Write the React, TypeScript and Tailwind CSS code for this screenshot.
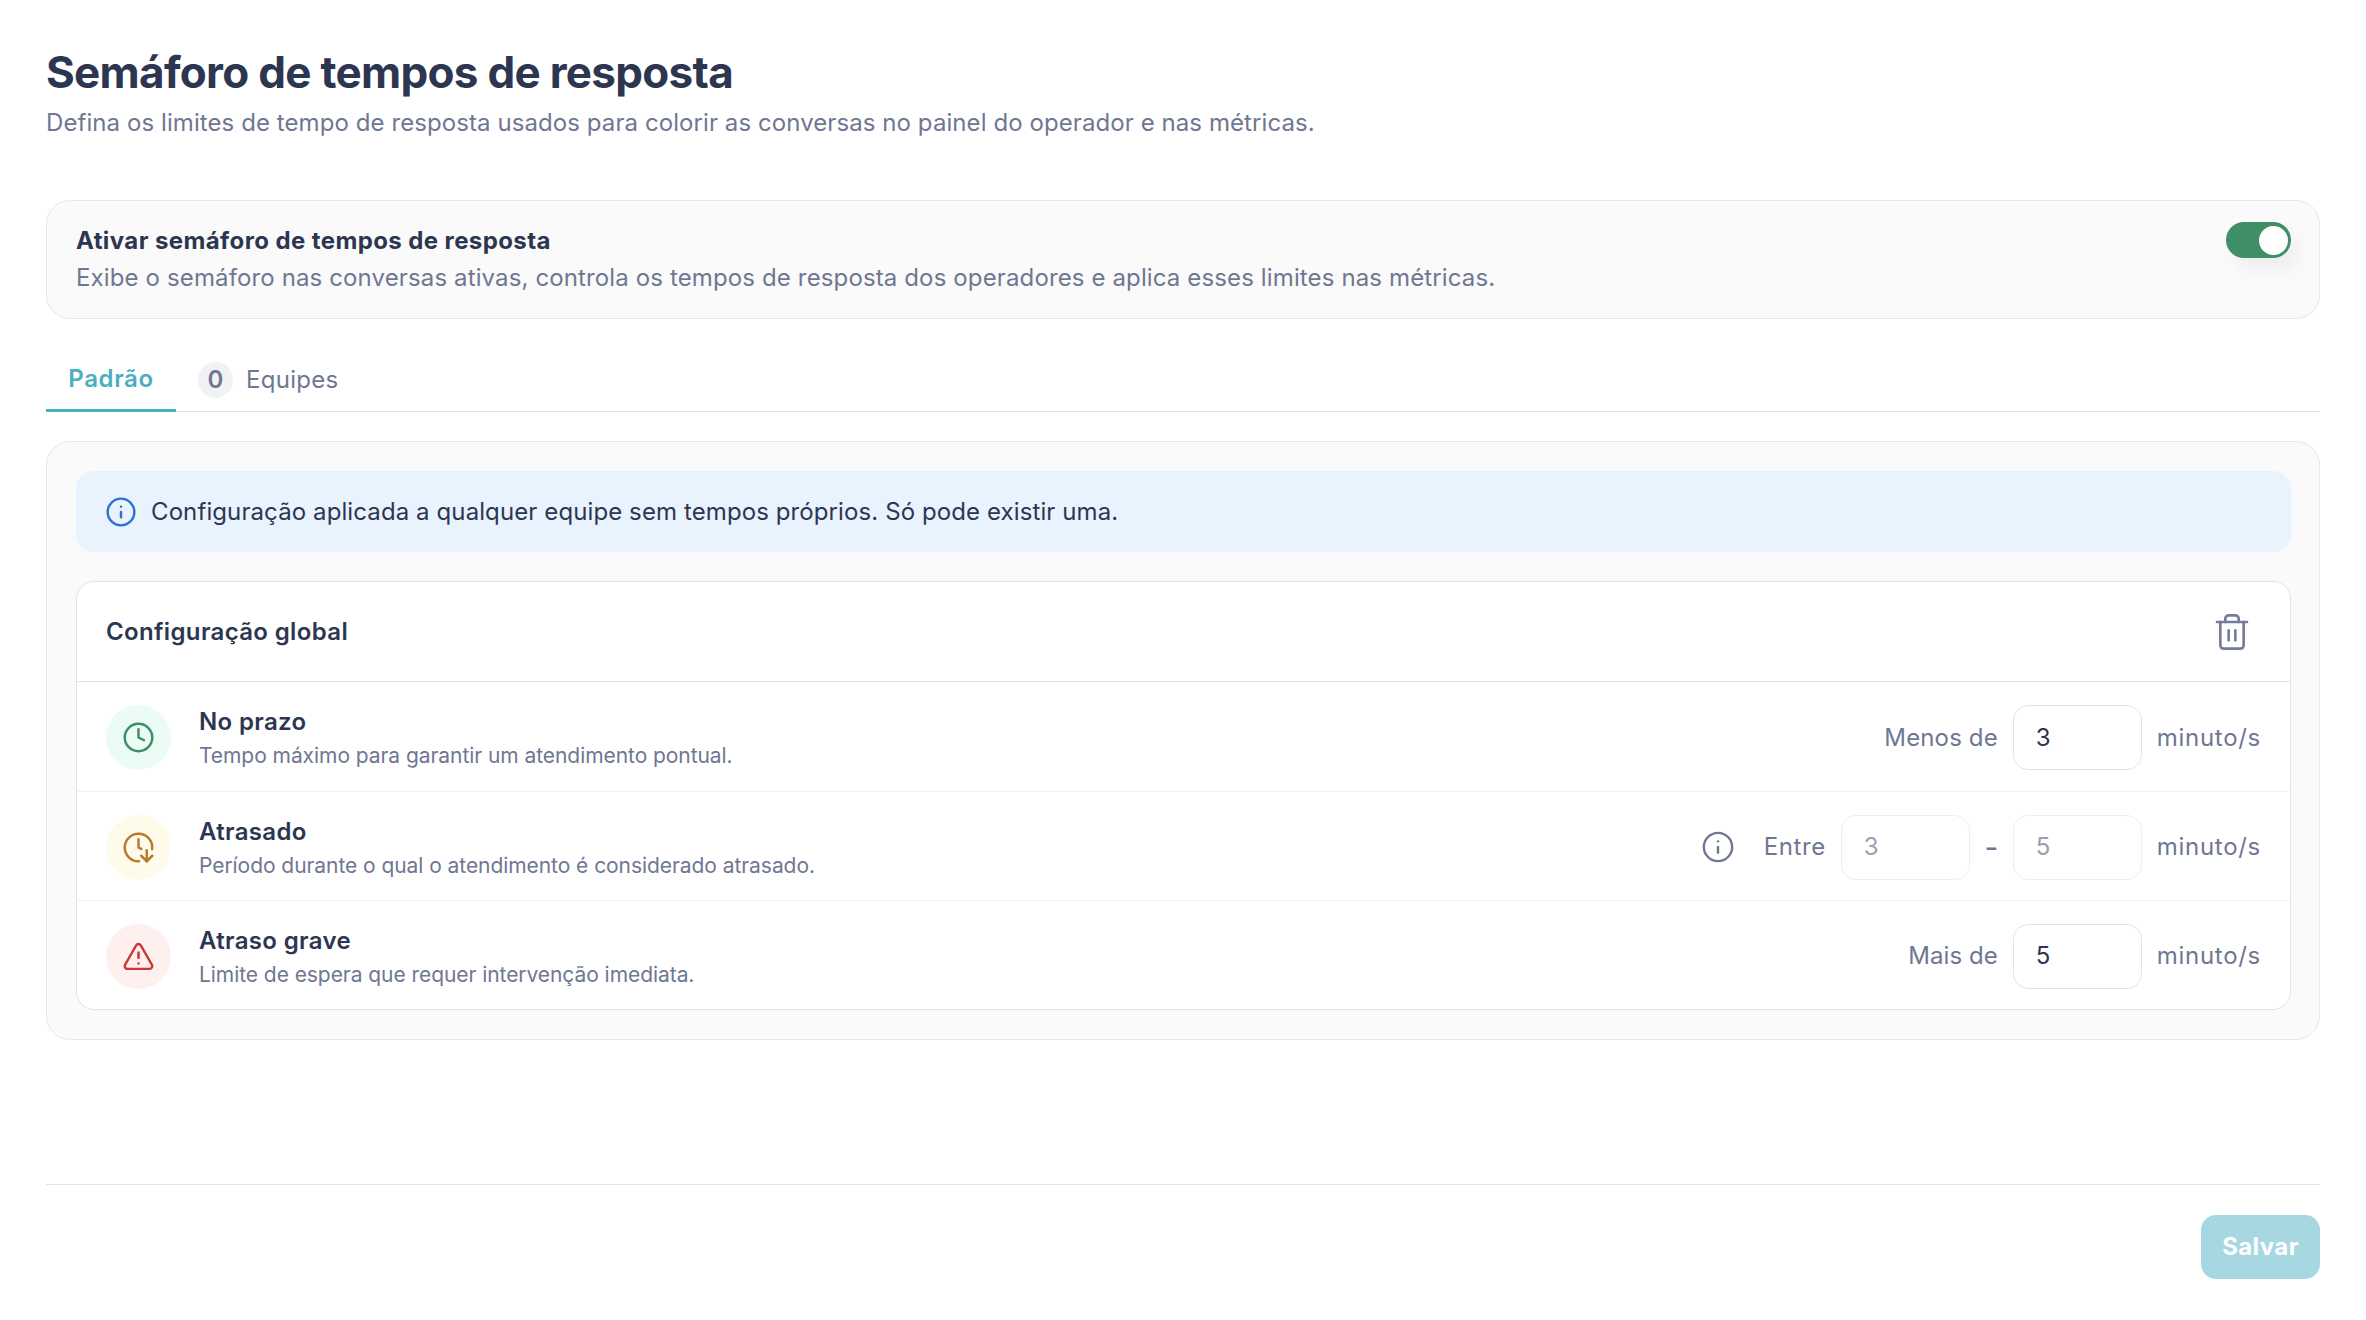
import React from 'react';
import { Clock, ClockArrowDown, Info, Trash2, TriangleAlert } from 'lucide-react';

const rows = [
  {
    title: 'No prazo',
    desc: 'Tempo máximo para garantir um atendimento pontual.',
    circle: 'bg-[#ebfbf5]',
    icon: <Clock size={33} strokeWidth={1.8} className="text-[#3f8f66]" />,
  },
  {
    title: 'Atrasado',
    desc: 'Período durante o qual o atendimento é considerado atrasado.',
    circle: 'bg-[#fefbeb]',
    icon: <ClockArrowDown size={33} strokeWidth={1.8} className="text-[#b67c2c]" />,
  },
  {
    title: 'Atraso grave',
    desc: 'Limite de espera que requer intervenção imediata.',
    circle: 'bg-[#fdf0ef]',
    icon: <TriangleAlert size={33} strokeWidth={1.8} className="text-[#cf3631]" />,
  },
];

const NumberBox = ({ value, disabled }: { value: string; disabled?: boolean }) => (
  <div
    className={
      'flex h-[65px] w-[129px] items-center rounded-[15px] border bg-white pl-[22px] text-[24px] ' +
      (disabled ? 'border-[#eeeef2] text-[#9a9fb2]' : 'border-[#e2e3e9] text-[#2d3651]')
    }
  >
    {value}
  </div>
);

const Unit = () => <span className="ml-[15px] tracking-[0.7px] text-[#6f7792]">minuto/s</span>;

export default function App() {
  return (
    <div className="min-h-screen bg-white px-[46px] pt-[45px] font-['Inter',sans-serif] text-[24px] tracking-[0.08px] text-[#6f7792]">
      <h1 className="text-[44px] leading-[54px] font-bold tracking-[-0.7px] text-[#2d3651]">
        Semáforo de tempos de resposta
      </h1>
      <p className="mt-[6px] leading-[36px]">
        Defina os limites de tempo de resposta usados para colorir as conversas no painel do operador e nas métricas.
      </p>

      <section className="mt-[59px] flex h-[119px] items-start justify-between rounded-[24px] border border-[#e6e6ee] bg-[#fafafa] pt-[21px] pr-[28px] pl-[29px]">
        <div>
          <div className="leading-[37px] font-bold tracking-[0.4px] text-[#2d3651]">Ativar semáforo de tempos de resposta</div>
          <div className="leading-[37px] tracking-[0.13px]">
            Exibe o semáforo nas conversas ativas, controla os tempos de resposta dos operadores e aplica esses limites nas métricas.
          </div>
        </div>
        <div className="relative h-[36px] w-[65px] rounded-full bg-[#3f8f66] shadow-[8px_12px_18px_rgba(0,0,0,0.05)]">
          <div className="absolute top-[3.5px] right-[3.5px] h-[29px] w-[29px] rounded-full bg-white" />
        </div>
      </section>

      <nav className="mt-[29px] flex h-[64px] border-b border-[#e0e0e6]">
        <div className="flex h-[64px] w-[130px] items-center justify-center border-b-[3px] border-[#4aafc0] font-semibold tracking-[0.6px] text-[#4aafc0]">
          Padrão
        </div>
        <div className="ml-[22px] flex items-center gap-[13px]">
          <span className="flex h-[36px] w-[35px] items-center justify-center rounded-full bg-[#f1f2f5] font-semibold">0</span>
          <span className="tracking-[0.3px]">Equipes</span>
        </div>
      </nav>

      <section className="mt-[29px] rounded-[24px] border border-[#e6e6ee] bg-[#fafafa] py-[29px] pr-[28px] pl-[29px]">
        <div className="flex h-[81px] items-center gap-[14px] rounded-[18px] bg-[#e8f3fe] pl-[29px] text-[#2d3651]">
          <Info size={32} strokeWidth={1.8} className="text-[#2f6fd1]" />
          <span className="tracking-[0.1px]">Configuração aplicada a qualquer equipe sem tempos próprios. Só pode existir uma.</span>
        </div>

        <div className="mt-[29px] rounded-[18px] border border-[#e2e3e9] bg-white">
          <div className="flex h-[100px] items-center justify-between border-b border-[#e2e3e9] pr-[38px] pl-[29px]">
            <span className="font-semibold tracking-[0.35px] text-[#2d3651]">Configuração global</span>
            <Trash2 size={40} strokeWidth={1.6} className="text-[#767d98]" />
          </div>
          {rows.map((row, i) => (
            <div
              key={row.title}
              className={'flex h-[109px] items-center pt-[2px] pr-[29px] pl-[29px] ' + (i > 0 ? 'border-t border-[#f2f2f5]' : '')}
            >
              <div className={'flex h-[65px] w-[65px] items-center justify-center rounded-full ' + row.circle}>{row.icon}</div>
              <div className="ml-[28px] flex-1">
                <div className="leading-[36px] font-semibold tracking-[0.35px] text-[#2d3651]">{row.title}</div>
                <div className="text-[21px] leading-[31px] tracking-[-0.06px]">{row.desc}</div>
              </div>
              {i === 0 && (
                <div className="flex items-center">
                  <span className="mr-[15px] tracking-[0.15px]">Menos de</span>
                  <NumberBox value="3" />
                  <Unit />
                </div>
              )}
              {i === 1 && (
                <div className="flex items-center">
                  <Info size={34} strokeWidth={1.7} className="mr-[29px] text-[#6f7792]" />
                  <span className="mr-[15px] tracking-[0.6px]">Entre</span>
                  <NumberBox value="3" disabled />
                  <span className="w-[43px] text-center text-[30px] leading-none">-</span>
                  <NumberBox value="5" disabled />
                  <Unit />
                </div>
              )}
              {i === 2 && (
                <div className="flex items-center">
                  <span className="mr-[15px]">Mais de</span>
                  <NumberBox value="5" />
                  <Unit />
                </div>
              )}
            </div>
          ))}
        </div>
      </section>

      <footer className="mt-[144px] flex justify-end border-t border-[#e2e3e9] pt-[30px]">
        <button className="h-[64px] w-[119px] rounded-[15px] bg-[#a7d8e2] font-bold tracking-[0.4px] text-white">Salvar</button>
      </footer>
    </div>
  );
}
